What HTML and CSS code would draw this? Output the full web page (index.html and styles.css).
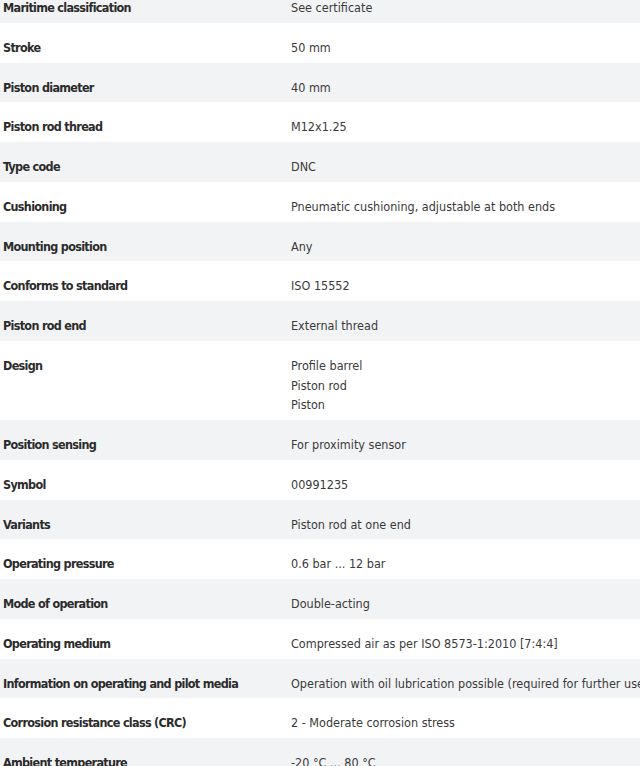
FILE: index.html
```html
<!DOCTYPE html>
<html lang="en">
<head>
<meta charset="utf-8">
<title>Technical data</title>
<link rel="stylesheet" href="styles.css">
</head>
<body>
<div class="specs">
  <div class="row alt"><div class="label">Maritime classification</div><div class="value">See certificate</div></div>
  <div class="row"><div class="label">Stroke</div><div class="value">50 mm</div></div>
  <div class="row alt"><div class="label">Piston diameter</div><div class="value">40 mm</div></div>
  <div class="row"><div class="label">Piston rod thread</div><div class="value">M12x1.25</div></div>
  <div class="row alt"><div class="label">Type code</div><div class="value">DNC</div></div>
  <div class="row"><div class="label">Cushioning</div><div class="value">Pneumatic cushioning, adjustable at both ends</div></div>
  <div class="row alt"><div class="label">Mounting position</div><div class="value">Any</div></div>
  <div class="row"><div class="label">Conforms to standard</div><div class="value">ISO 15552</div></div>
  <div class="row alt"><div class="label">Piston rod end</div><div class="value">External thread</div></div>
  <div class="row"><div class="label">Design</div><div class="value">Profile barrel<br>Piston rod<br>Piston</div></div>
  <div class="row alt"><div class="label">Position sensing</div><div class="value">For proximity sensor</div></div>
  <div class="row"><div class="label">Symbol</div><div class="value">00991235</div></div>
  <div class="row alt"><div class="label">Variants</div><div class="value">Piston rod at one end</div></div>
  <div class="row"><div class="label">Operating pressure</div><div class="value">0.6 bar ... 12 bar</div></div>
  <div class="row alt"><div class="label">Mode of operation</div><div class="value">Double-acting</div></div>
  <div class="row"><div class="label">Operating medium</div><div class="value">Compressed air as per ISO 8573-1:2010 [7:4:4]</div></div>
  <div class="row alt"><div class="label">Information on operating and pilot media</div><div class="value">Operation with oil lubrication possible (required for further use)</div></div>
  <div class="row"><div class="label">Corrosion resistance class (CRC)</div><div class="value">2 - Moderate corrosion stress</div></div>
  <div class="row alt"><div class="label">Ambient temperature</div><div class="value">-20 °C ... 80 °C</div></div>
</div>
</body>
</html>
```
FILE: styles.css
```css
html, body {
  margin: 0;
  padding: 0;
  background: #ffffff;
  overflow: hidden;
}
body {
  font-family: "DejaVu Sans Condensed", "DejaVu Sans", sans-serif;
  font-stretch: condensed;
  font-size: 12.5px;
  color: #333333;
}
.specs {
  margin-top: -17px;
}
.row {
  display: grid;
  grid-template-columns: 288px 1fr;
  padding: 15px 0 5px 3px;
  line-height: 19.75px;
  white-space: nowrap;
}
.row.alt {
  background: #f2f3f5;
}
.label {
  font-weight: bold;
  letter-spacing: -0.7px;
  color: #2b2b2b;
}
.value {
  color: #3a3a3a;
}
```
